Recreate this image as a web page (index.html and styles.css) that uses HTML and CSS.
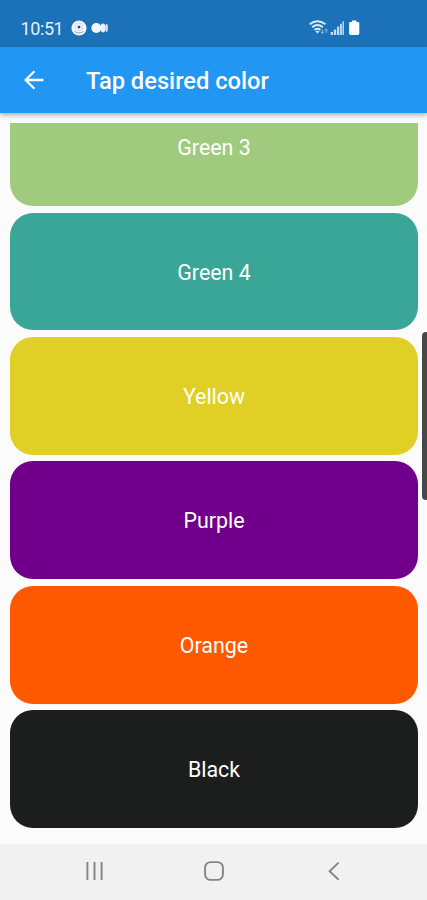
FILE: index.html
```html
<!DOCTYPE html>
<html lang="en">
<head>
<meta charset="utf-8">
<title>Tap desired color</title>
<link rel="stylesheet" href="styles.css">
</head>
<body>
<div class="screen">
  <header class="status">
    <span class="time">10:51</span>
    <svg class="notices" width="40" height="18" viewBox="0 0 40 18">
      <circle cx="8" cy="9" r="7.6" fill="#f4f8fc"/>
      <circle cx="8" cy="8" r="3.9" fill="none" stroke="#b9d0e6" stroke-width=".7"/>
      <circle cx="8" cy="8" r="1.5" fill="#28568c"/>
      <path d="M3.4 12.4Q8 15.6 12.6 12.4" fill="none" stroke="#7ea8d0"/>
      <circle cx="25.3" cy="9" r="5" fill="#f4f8fc"/>
      <ellipse cx="32" cy="9" rx="2.6" ry="4.4" fill="#e9f2fa"/>
      <ellipse cx="35.6" cy="9" rx="1.3" ry="3.9" fill="#d0e2f2"/>
    </svg>
    <svg class="signals" width="54" height="18" viewBox="0 0 54 18">
      <g fill="none" stroke="#dce9f5" stroke-width="1.9">
        <path d="M.6 5.2Q8.5-.9 16.4 5.2"/>
        <path d="M3.2 8.2Q8.5 3.9 13.8 8.2"/>
        <path d="M5.6 11Q8.5 8.6 11.4 11"/>
      </g>
      <path d="M6.4 12h4.2l-2.1 2.8z" fill="#dce9f5"/>
      <path d="M13.4 14.6v-4M12 12.8l1.4 1.8 1.4-1.8M17.2 10v4M15.8 11.6L17.2 10l1.4 1.6" fill="none" stroke="#8cb6db" stroke-width="1"/>
      <path d="M21.6 13.1h2.4V16h-2.4zM24.8 10.4h2.4V16h-2.4zM28 7.6h2.3V16H28z" fill="#c3daee"/>
      <path d="M31 4.8h2V16h-2zM33.5 2.3h1.5V16h-1.5z" fill="#b9d3ea"/>
      <path d="M43 1.4h4.4v1.5h1.5q1.4 0 1.4 1.4v10.2q0 1.4-1.4 1.4h-7.4q-1.4 0-1.4-1.4V4.3q0-1.4 1.4-1.4H43z" fill="#fafcfe"/>
    </svg>
  </header>
  <div class="appbar">
    <svg class="back" width="20" height="20" viewBox="0 0 20 20" fill="none" stroke="#fff" stroke-width="2.3">
      <path d="M19.4 10H2M10.4 1.2L1.6 10l8.8 8.8"/>
    </svg>
    <h1>Tap desired color</h1>
  </div>
  <main class="content">
    <div class="list">
      <div class="card green3">Green 3</div>
      <div class="card green4">Green 4</div>
      <div class="card yellow">Yellow</div>
      <div class="card purple">Purple</div>
      <div class="card orange">Orange</div>
      <div class="card black">Black</div>
    </div>
    <div class="edge-handle"></div>
  </main>
  <nav class="navbar">
    <svg width="20" height="20" viewBox="0 0 20 20" stroke="#848484" stroke-width="1.9">
      <path d="M3.4 1v18M10.5 1v18M17.6 1v18"/>
    </svg>
    <svg width="20" height="20" viewBox="0 0 20 20" fill="none" stroke="#848484" stroke-width="1.9">
      <rect x="1.1" y="1.1" width="17.8" height="17.8" rx="5.4"/>
    </svg>
    <svg width="20" height="20" viewBox="0 0 20 20" fill="none" stroke="#848484" stroke-width="1.9">
      <path d="M14.6 1.6L5.6 10.2l9 8.6"/>
    </svg>
  </nav>
</div>
</body>
</html>
```
FILE: styles.css
```css
* { box-sizing: border-box; }
body { margin: 0; font-family: Roboto, sans-serif; }
svg { display: block; flex: none; }

.screen {
  display: flex;
  flex-direction: column;
  width: 427px;
  height: 900px;
  overflow: hidden;
  background: #fbfbfb;
}

.status {
  display: flex;
  align-items: center;
  flex: none;
  height: 46.5px;
  padding: 10px 64px 0 20.5px;
  background: #1c72b9;
  color: #e6f0f9;
}
.time {
  width: 50px;
  padding-top: 2px;
  font-size: 18px;
  line-height: 20px;
  letter-spacing: -.4px;
}
.signals { margin-left: auto; }

.appbar {
  display: flex;
  align-items: center;
  flex: none;
  height: 66.5px;
  padding-left: 24px;
  background: #2196f3;
  color: #fff;
  box-shadow: 0 2px 5px rgba(0, 0, 0, .32);
  z-index: 1;
}
.appbar h1 {
  margin: 2px 0 0 42px;
  font-size: 23.7px;
  line-height: 28px;
  font-weight: 500;
}

.content {
  position: relative;
  flex: 1;
  min-height: 0;
  padding: 9.5px 9.3px 16px 10.3px;
}
.list {
  display: flex;
  flex-direction: column;
  justify-content: flex-end;
  gap: 6.5px;
  height: 100%;
  overflow: hidden;
}
.card {
  display: flex;
  align-items: center;
  justify-content: center;
  flex: none;
  height: 117.9px;
  padding-top: 1.4px;
  border-radius: 23px;
  color: #fff;
  font-size: 21.4px;
}
.green3 { background: #a0cb7e; }
.green4 { background: #3aa697; }
.yellow { background: #e0d026; }
.purple { background: #70008c; }
.orange { background: #ff5900; }
.black { background: #1c1e1d; }

.edge-handle {
  position: absolute;
  top: 219px;
  right: 0;
  width: 5px;
  height: 168px;
  border-radius: 4px 0 0 4px;
  background: #474747;
}

.navbar {
  display: flex;
  align-items: center;
  flex: none;
  gap: 100px;
  height: 56px;
  padding: 0 0 2px 84px;
  background: #f1f1f1;
}
```
